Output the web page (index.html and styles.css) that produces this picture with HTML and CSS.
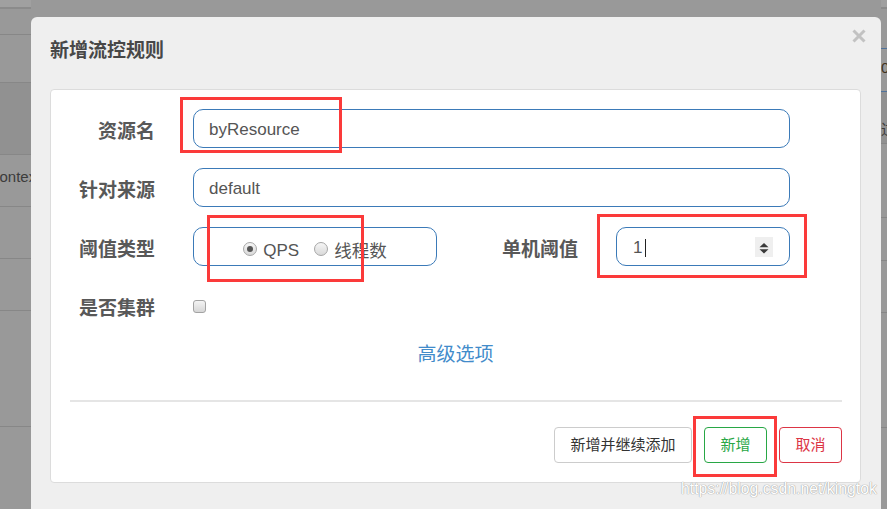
FILE: index.html
```html
<!DOCTYPE html>
<html lang="zh-CN">
<head>
<meta charset="utf-8">
<title>新增流控规则</title>
<link rel="stylesheet" href="styles.css">
</head>
<body>
<div class="page">
  <div class="bg-col bg-left">
    <div class="bg-top"></div>
    <div class="bg-row r26"></div>
    <div class="bg-row r48"></div>
    <div class="bg-row band r72"></div>
    <div class="bg-row r52"><span class="bg-text t1">context:</span></div>
    <div class="bg-row r52"></div>
    <div class="bg-row r52"></div>
    <div class="bg-row r116"><span class="bg-text t2">t</span></div>
    <div class="bg-row"></div>
  </div>
  <div class="bg-fill"></div>
  <div class="bg-col bg-right">
    <div class="bg-top"></div>
    <div class="bg-row blue r40"></div>
    <div class="bg-row blue r43"><span class="bg-text t3">0</span></div>
    <div class="bg-row band r52"><span class="bg-text t4">过</span></div>
    <div class="bg-row r74"></div>
    <div class="bg-row r43"></div>
    <div class="bg-row r52"></div>
    <div class="bg-row r115"></div>
    <div class="bg-row"></div>
  </div>
</div>

<div class="modal">
  <div class="modal-header">
    <h4 class="modal-title">新增流控规则</h4>
    <span class="close">
      <svg width="14" height="14" viewBox="0 0 14 14"><path d="M1.5 1.5 L12.5 12.5 M12.5 1.5 L1.5 12.5" stroke="#c2c2c2" stroke-width="3" fill="none"/></svg>
    </span>
  </div>
  <div class="panel">
    <div class="form">
      <div class="form-row">
        <label class="label">资源名</label>
        <div class="input wide">byResource</div>
      </div>
      <div class="form-row">
        <label class="label">针对来源</label>
        <div class="input wide">default</div>
      </div>
      <div class="form-row">
        <label class="label">阈值类型</label>
        <div class="input radio-group">
          <span class="radio checked"></span><span class="radio-text">QPS</span>
          <span class="radio second"></span><span class="radio-text">线程数</span>
        </div>
        <label class="label label-mid">单机阈值</label>
        <div class="input number">
          <span class="num-value">1</span><span class="caret"></span>
          <span class="spinner">
            <svg width="18" height="20" viewBox="0 0 18 20"><path d="M9 6 L13.5 10.3 L4.5 10.3 Z M4.5 12.3 L13.5 12.3 L9 16.6 Z" fill="#3a3a3a"/></svg>
          </span>
        </div>
      </div>
      <div class="form-row">
        <label class="label">是否集群</label>
        <span class="checkbox"></span>
      </div>
    </div>
    <div class="adv">高级选项</div>
    <div class="sep"></div>
    <div class="footer">
      <button class="btn btn-default">新增并继续添加</button>
      <button class="btn btn-success">新增</button>
      <button class="btn btn-danger">取消</button>
    </div>
  </div>
</div>

<div class="mark m1"></div>
<div class="mark m2"></div>
<div class="mark m3"></div>
<div class="mark m4"></div>
<div class="watermark">https://blog.csdn.net/kingtok</div>
</body>
</html>
```

FILE: styles.css
```css
* { box-sizing: border-box; }
html, body {
  margin: 0;
  padding: 0;
}
body {
  width: 887px;
  height: 509px;
  overflow: hidden;
  position: relative;
  background: #999999;
  font-family: "Liberation Sans", "Noto Sans CJK SC", sans-serif;
}

/* background page (dimmed) */
.page {
  display: flex;
  height: 509px;
}
.bg-col {
  display: flex;
  flex-direction: column;
  overflow: hidden;
}
.bg-left { width: 31px; }
.bg-fill { flex: 1; }
.bg-right { width: 6px; }
.bg-top {
  height: 9px;
  flex: none;
  background: #a0a0a0;
  border-bottom: 2px solid #8b8b8b;
}
.bg-row {
  flex: none;
  border-bottom: 1px solid #878787;
  position: relative;
}
.bg-row:last-child { flex: 1; border-bottom: 0; }
.bg-row.blue { border-bottom-color: #50729a; }
.bg-row.band { background: #919191; }
.r26 { height: 26px; }
.r40 { height: 40px; }
.r43 { height: 43px; }
.r48 { height: 48px; }
.r52 { height: 52px; }
.r72 { height: 72px; }
.r74 { height: 74px; }
.r115 { height: 115px; }
.r116 { height: 116px; }
.bg-text {
  display: block;
  white-space: nowrap;
  font-size: 15px;
  line-height: 18px;
  color: #3c3c3c;
}
.t1 { margin-top: 13px; margin-left: -8px; }
.t2 { margin-top: 15px; margin-left: -5px; }
.t3 { margin-top: 10px; margin-left: 0; color: #40331f; }
.t4 { margin-top: 29px; margin-left: 0; }

/* modal */
.modal {
  position: absolute;
  left: 31px;
  top: 17px;
  width: 850px;
  height: 492px;
  background: #efefef;
  border-radius: 6px 6px 0 0;
  padding: 20px 20px 0 19px;
}
.modal-header {
  height: 26px;
}
.modal-title {
  margin: 0;
  font-size: 19px;
  line-height: 28px;
  font-weight: bold;
  color: #474747;
}
.close {
  position: absolute;
  top: 12px;
  right: 15px;
  width: 14px;
  height: 14px;
  display: block;
}
.close svg { display: block; }

.panel {
  margin-top: 26px;
  width: 811px;
  height: 394px;
  background: #ffffff;
  border: 1px solid #dcdcdc;
  border-radius: 4px;
  padding: 19px 18px 0 0;
  display: flex;
  flex-direction: column;
}
.form {
  display: flex;
  flex-direction: column;
  gap: 20px;
}
.form-row {
  display: flex;
  align-items: center;
  height: 39px;
}
.label {
  width: 104px;
  flex: none;
  margin-right: 38px;
  text-align: right;
  font-size: 19px;
  font-weight: bold;
  color: #585858;
  line-height: 24px;
  padding-top: 7px;
}
.label-mid {
  width: 141px;
}
.input {
  height: 39px;
  border: 1px solid #3b7ab8;
  border-radius: 10px;
  font-size: 17px;
  color: #555555;
  display: flex;
  align-items: center;
  padding-left: 15px;
  padding-top: 2px;
  flex: none;
}
.wide { width: 597px; }

.radio-group {
  width: 244px;
  padding-left: 0;
  justify-content: center;
  padding-top: 8px;
}
.radio {
  width: 14px;
  height: 14px;
  border-radius: 50%;
  border: 1px solid #a6a6a6;
  background: linear-gradient(#f6f6f6, #d9d9d9);
  position: relative;
  margin-right: 6px;
  flex: none;
  margin-top: -3px;
}
.radio.checked::after {
  content: "";
  position: absolute;
  left: 3px;
  top: 3px;
  width: 6px;
  height: 6px;
  border-radius: 50%;
  background: #555555;
}
.radio.second { margin-left: 15px; }
.radio-text {
  font-size: 17px;
  line-height: 22px;
  color: #555555;
}
.radio-text:last-child { font-size: 17.5px; }

.number {
  width: 174px;
  padding-left: 16px;
  position: relative;
}
.num-value {
  line-height: 20px;
}
.caret {
  width: 1px;
  height: 18px;
  background: #222222;
  margin-left: 3px;
}
.spinner {
  margin-left: auto;
  margin-right: 16px;
  margin-top: -2px;
  width: 18px;
  height: 20px;
  background: #efefef;
}
.spinner svg { display: block; }

.checkbox {
  width: 13px;
  height: 13px;
  border: 1px solid #a3a3a3;
  border-radius: 3px;
  background: linear-gradient(#f4f4f4, #d6d6d6);
  margin-top: 2px;
}

.adv {
  margin-top: 16px;
  text-align: center;
  font-size: 19px;
  line-height: 28px;
  color: #428bca;
  padding-left: 18px;
}
.sep {
  margin: 31px 0 0 19px;
  height: 2px;
  background: #e5e5e5;
}
.footer {
  margin-top: 25px;
  display: flex;
  justify-content: flex-end;
  gap: 12px;
}
.btn {
  height: 36px;
  padding: 0 15.5px;
  font-family: "Liberation Sans", "Noto Sans CJK SC", sans-serif;
  font-size: 15px;
  background: #ffffff;
  border: 1px solid #cccccc;
  border-radius: 4px;
  color: #333333;
  line-height: 34px;
}
.btn-success {
  border-color: #28a745;
  color: #28a745;
}
.btn-danger {
  border-color: #dc3545;
  color: #dc3545;
}

/* annotation boxes over the screenshot */
.mark {
  position: absolute;
  border: 3px solid #fb3a3a;
}
.m1 { left: 180px; top: 97px; width: 162px; height: 56px; }
.m2 { left: 207px; top: 215px; width: 157px; height: 67px; }
.m3 { left: 597px; top: 214px; width: 210px; height: 64px; }
.m4 { left: 693px; top: 416px; width: 84px; height: 61px; }

.watermark {
  position: absolute;
  left: 681px;
  top: 479px;
  font-size: 15.8px;
  line-height: 20px;
  color: #ffffff;
  text-shadow: 0 0 1px #9a9a9a, 0 0 1px #9a9a9a;
  white-space: nowrap;
}
```
